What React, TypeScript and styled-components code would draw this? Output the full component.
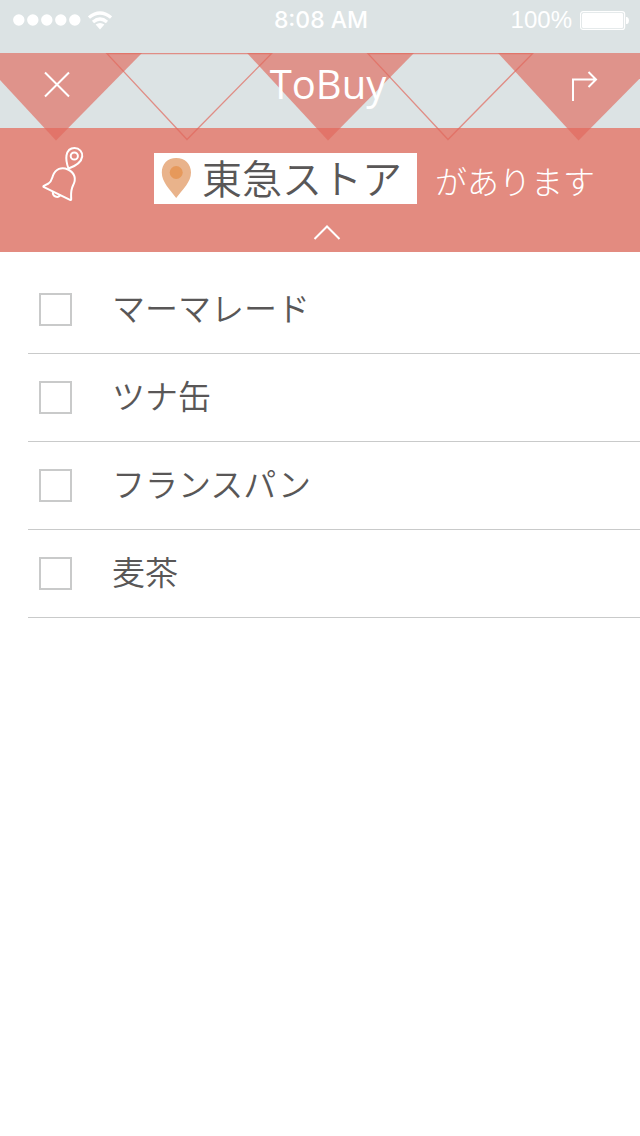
import React, { useState } from "react";
import styled, { createGlobalStyle } from "styled-components";

const coral = "#e38b80";
const mist = "#dce3e4";
const ink = "#595757";
const jp = `"Noto Sans CJK JP", "Noto Sans", sans-serif`;

const GlobalStyle = createGlobalStyle`
  * { box-sizing: border-box; }
  body { margin: 0; background: #fff; font-family: ${jp}; color: ${ink}; }
  button { border: 0; padding: 0; background: none; color: inherit; cursor: pointer; font: inherit; }
  svg { display: block; }
`;

const Page = styled.div`
  display: flex;
  flex-direction: column;
  min-height: 100vh;
  background: #fff;
`;

const StatusBar = styled.div`
  display: grid;
  grid-template-columns: 1fr auto 1fr;
  align-items: center;
  height: 53px;
  padding: 0 11px 13px 13px;
  background: ${mist};
  color: #fff;
`;

const Signal = styled.div`
  display: flex;
  align-items: center;
  gap: 7px;
`;

const Clock = styled.time`
  font: 500 23px/28px Inter, sans-serif;
`;

const Battery = styled.div`
  display: flex;
  align-items: center;
  justify-content: flex-end;
  gap: 8px;
  font: 300 24px/28px "Liberation Sans", sans-serif;
`;

const Header = styled.header`
  position: relative;
`;

const Garland = styled.svg`
  position: absolute;
  top: 0;
  left: 0;
  width: 100%;
  height: 88px;
  pointer-events: none;
`;

const NavBar = styled.div`
  display: grid;
  grid-template-columns: 1fr auto 1fr;
  align-items: center;
  height: 75px;
  padding: 0 40px 12px;
  background: ${mist};
`;

const IconButton = styled.button<{ $end?: boolean }>`
  position: relative;
  z-index: 1;
  justify-self: ${(p) => (p.$end ? "end" : "start")};
`;

const Title = styled.h1`
  position: relative;
  z-index: 1;
  margin: 0;
  padding: 0 0 2px 16px;
  color: #fff;
  font: 500 40px/48px "Open Sans", sans-serif;
`;

const Notice = styled.section`
  display: flex;
  flex-direction: column;
  align-items: center;
  height: 124px;
  padding-top: 18px;
  background: ${coral};
  color: #fff;
`;

const NoticeRow = styled.div`
  display: flex;
  justify-content: space-between;
  align-items: flex-start;
  width: 100%;
  padding: 0 45px 0 40px;
`;

const Message = styled.p`
  display: flex;
  align-items: center;
  gap: 18px;
  margin: 0;
  padding-top: 6px;
  font-size: 32px;
  font-weight: 300;
  line-height: 48px;
`;

const Suffix = styled.span`
  padding-top: 4px;
`;

const StoreTag = styled.button`
  display: flex;
  align-items: center;
  gap: 10px;
  height: 51px;
  padding: 0 15px 0 7px;
  background: #fff;
`;

const StoreName = styled.span`
  padding-bottom: 2px;
  color: ${ink};
  font-size: 40px;
  font-weight: 350;
  line-height: 48px;
`;

const Collapse = styled.button`
  margin-top: 20px;
  padding-left: 14px;
`;

const List = styled.ul`
  margin: 0;
  padding: 14px 0 0 28px;
  list-style: none;
`;

const Item = styled.li`
  height: 88px;
  border-bottom: 1px solid #c9caca;
`;

const ItemLabel = styled.label`
  display: flex;
  align-items: center;
  gap: 40px;
  height: 100%;
  padding-left: 11px;
  cursor: pointer;
`;

const ItemName = styled.span`
  padding-bottom: 6px;
  font-size: 33px;
  font-weight: 350;
  line-height: 48px;
`;

const Tick = styled.input`
  appearance: none;
  width: 33px;
  height: 33px;
  margin: 0;
  border: 2px solid #c9caca;
  background: #fff;
  &:checked {
    background: ${coral};
  }
`;

const items = ["マーマレード", "ツナ缶", "フランスパン", "麦茶"];

export default function App() {
  const [done, setDone] = useState<string[]>([]);
  const toggle = (name: string) =>
    setDone((d) => (d.includes(name) ? d.filter((n) => n !== name) : [...d, name]));

  return (
    <Page>
      <GlobalStyle />
      <StatusBar>
        <Signal>
          <svg width="68" height="12" viewBox="0 0 68 12" fill="#fff" aria-hidden="true">
            {[0, 1, 2, 3, 4].map((i) => (
              <circle key={i} cx={5.8 + i * 14} cy="6" r="5.7" />
            ))}
          </svg>
          <svg width="24" height="19" viewBox="0 0 24 19" aria-hidden="true">
            <g fill="none" stroke="#fff" strokeWidth="3.2">
              <path d="M1 6.6Q12-2.6 23 6.6" />
              <path d="M5 11Q12 5 19 11" />
            </g>
            <path d="M7.6 13.6Q12 10.4 16.4 13.6L12 18.4Z" fill="#fff" />
          </svg>
        </Signal>
        <Clock>8:08 AM</Clock>
        <Battery>
          <span>100%</span>
          <svg width="49" height="19" viewBox="0 0 49 19" aria-hidden="true">
            <rect x="0.6" y="0.6" width="44" height="17.8" rx="2.5" fill="none" stroke="#fff" strokeWidth="1.2" />
            <rect x="2" y="2" width="41.2" height="15" rx="1.5" fill="#fff" />
            <path d="M46 6h1.2q1.8 1 1.8 3.5t-1.8 3.5H46z" fill="#fff" />
          </svg>
        </Battery>
      </StatusBar>

      <Header>
        <Garland viewBox="0 0 640 88" preserveAspectRatio="none" aria-hidden="true">
          <g fill="#e1685c" fillOpacity="0.66">
            <path d="M-25 0H142L56 87.5Z" />
            <path d="M247 0H414L328 87.5Z" />
            <path d="M498 0H665L578.5 87.5Z" />
          </g>
          <g fill="none" stroke="#e1685c" strokeOpacity="0.7" strokeWidth="1.3">
            <path d="M107 0.6H271.500L187 86.500Z" />
            <path d="M368 0.6H532.500L448 86.500Z" />
          </g>
        </Garland>
        <NavBar>
          <IconButton aria-label="閉じる">
            <svg width="34" height="29" viewBox="0 0 34 29" fill="none" stroke="#fff" strokeWidth="2">
              <path d="M5 2.500L29 26.500M29 2.500L5 26.500" />
            </svg>
          </IconButton>
          <Title>ToBuy</Title>
          <IconButton $end aria-label="共有">
            <svg width="30" height="38" viewBox="0 0 30 38" fill="none" stroke="#fff" strokeWidth="2">
              <path d="M3 35V13.500H26M18.500 6L26 13.500L18.500 21" />
            </svg>
          </IconButton>
        </NavBar>
        <Notice>
          <NoticeRow>
            <IconButton aria-label="通知">
              <svg
                width="46"
                height="57"
                viewBox="0 0 46 57"
                fill="none"
                stroke="#fff"
                strokeWidth="2"
                strokeLinecap="round"
                strokeLinejoin="round"
              >
                <path d="M28.500 22.500C26 16 26 12.500 26.500 9.500C27.300 5 30 2 34.500 2C39.500 2 42.700 6 42.200 10.500C41.500 15.500 37 19.500 28.500 22.500Z" />
                <circle cx="34.300" cy="10" r="3.600" />
                <path d="M28 23.500C21.500 20.300 15.500 23 13 29.500C11.800 33 11.500 35.500 8.500 37.500L3.800 39.800Q2.800 40.500 4 41.200L30 53.800Q31.300 54.300 31.200 53C31 47 30.500 44.500 33 39.500C36.500 33 35 27 28 23.500Z" />
                <path d="M12.800 46.500C12.800 50.500 17.500 52.300 20 49.500" />
              </svg>
            </IconButton>
            <Message>
              <StoreTag>
                <svg width="31" height="42" viewBox="0 0 31 42" aria-hidden="true">
                  <path
                    d="M15.200 1C24 1 30 7 30 15.500C30 25 22 32 15.200 41C8.500 32 0.800 25 0.800 15.500C0.800 7 6.500 1 15.200 1Z"
                    fill="#e9b38b"
                  />
                  <circle cx="15.200" cy="15.500" r="6.500" fill="#e6995b" />
                </svg>
                <StoreName>東急ストア</StoreName>
              </StoreTag>
              <Suffix>があります</Suffix>
            </Message>
          </NoticeRow>
          <Collapse aria-label="たたむ">
            <svg width="28" height="18" viewBox="0 0 28 18" fill="none" stroke="#fff" strokeWidth="2">
              <path d="M1.500 15L14 2.500L26.500 15" />
            </svg>
          </Collapse>
        </Notice>
      </Header>

      <main>
        <List>
          {items.map((name) => (
            <Item key={name}>
              <ItemLabel>
                <Tick type="checkbox" checked={done.includes(name)} onChange={() => toggle(name)} />
                <ItemName>{name}</ItemName>
              </ItemLabel>
            </Item>
          ))}
        </List>
      </main>
    </Page>
  );
}
